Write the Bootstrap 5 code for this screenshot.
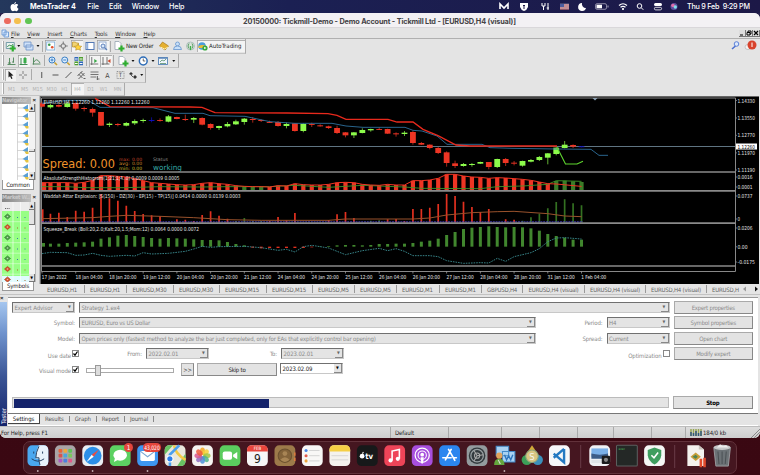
<!DOCTYPE html>
<html lang="en">
<head>
    <meta charset="UTF-8">
    <meta name="viewport" content="width=device-width, initial-scale=1.0">
    <title>MetaTrader 4 - Strategy Tester</title>
    <link rel="stylesheet" href="https://cdn.jsdelivr.net/npm/bootstrap@5.3.2/dist/css/bootstrap.min.css">
    <style>
        body { width: 760px; height: 475px; overflow: hidden; font: 6px/1 "DejaVu Sans Condensed", "DejaVu Sans", sans-serif; letter-spacing: -.1px; color: #222; background: linear-gradient(#242352, #3b0a14 30%, #3a0812); }
        svg { display: block; flex: none; letter-spacing: 0; }
        .mac-bar { height: 13px; padding: 0 10px 0 10px; background: linear-gradient(90deg, #24385c, #1b2053 38%, #1c1847); color: #fff; font: 500 7.2px/13px Inter, sans-serif; }
        .mac-bar b { font-weight: 700; margin: 0 11.5px 0 11px; }
        .mac-bar .menu-gap { gap: 10px; }
        .app-window { height: 425px; background: #e4e4e4; border-radius: 6px; overflow: hidden; }
        .title-row { height: 15px; background: #f3f1f4; border-bottom: 1px solid #d9d7da; font: 600 7.3px/15px Inter, sans-serif; color: #4b494c; padding: 1px 0 0 4px; }
        .light { width: 6.6px; height: 6.6px; border-radius: 50%; margin-top: 1px; }
        .lights { width: 90px; gap: 3.9px; }
        .menu-row { height: 11px; border-bottom: 1px solid #b0b0b0; padding: 1px 0 0 1px; font-size: 6px; color: #333; }
        .menu-row .items { gap: 7.7px; padding-left: 2px; }
        .menu-row u { text-underline-offset: 1px; text-decoration-thickness: .5px; }
        .win-btn { width: 7px; height: 7px; background: #ddd; border-right: 1px solid #777; border-bottom: 1px solid #777; }
        .tool-row { border-right: 1px solid #aaa; border-bottom: 1px solid #c4c4c4; padding-left: 2px; }
        .grip { width: 2px; height: 11px; border-right: 1px solid #aaa; border-left: 1px solid #fff; margin-right: 1px; }
        .tool-sep { width: 1px; height: 11px; background: #aaa; margin: 0 1.3px; }
        .pressed { background: #f4f4f4; box-shadow: inset .7px .7px #999; }
        .work-area { height: 188px; }
        .side-col { width: 40px; padding: 1px 3px 0 2px; border-right: 1px solid #bbb; }
        .side-head { height: 7.5px; font-size: 5.6px; font-weight: bold; letter-spacing: -.3px; color: #c9c9c9; background: linear-gradient(90deg, #868686, #bcbcbc); width: 29px; line-height: 7px; white-space: nowrap; }
        .side-x { font: bold 6px/7px "Liberation Sans", sans-serif; color: #222; }
        .side-tab { width: 32px; background: #fff; border: 1px solid #999; border-top: 0; text-align: center; font-size: 6px; }
        .scroll-col { width: 8px; background: #f3f3f3; border-right: 1px solid #bbb; }
        .scroll-btn { height: 8px; background: #e4e4e4; border-right: 1px solid #777; border-bottom: 1px solid #777; font-size: 4px; line-height: 7px; text-align: center; color: #000; }
        .tab-strip { height: 11px; padding-top: 1px; border-bottom: 1px solid #c3c3c3; color: #666; font-size: 6px; letter-spacing: -.2px; display: grid; grid-template-columns: 43px 42.5px 46.5px 46px 47px 46px 42px 42px 43px 42px 41.5px 61.5px 61px 61px 31px 8px 8px; padding-left: 47px; line-height: 9px; }
        .tab-strip span { white-space: nowrap; border-right: 1px solid #999; margin-right: 5.5px; height: 8px; }
        .tab-strip .bare { border: 0; margin: 0; color: #222; }
        .tester { height: 131px; }
        .tester-side { width: 8px; }
        .tester-name { background: linear-gradient(#14236b, #3b5595 40%, #6f93cd 75%, #a5c6ef); width: 7px; color: #fff; writing-mode: vertical-rl; transform: rotate(180deg); line-height: 7px; font-size: 6.2px; padding-top: 2px; }
        .tester-main { border-top: 1px solid #999; margin-top: 2px; background: #fff; margin-right: 2px; }
        .tester-body { height: 115px; padding: 4px 5px 0 4px; color: #8a8a8a; }
        .t-row { height: 15.3px; }
        .field { height: 11px; background: #e4e4e4; border: 1px solid #c8c8c8; border-top-color: #707070; border-left-color: #707070; line-height: 9.5px; padding-left: 1.5px; white-space: nowrap; font-size: 6px; }
        .field-long { width: 457px; letter-spacing: -.17px; }
        .drop { width: 8px; height: 9px; background: #e4e4e4; border-right: 1px solid #888; border-bottom: 1px solid #888; color: #666; font-size: 4px; line-height: 8px; text-align: center; letter-spacing: 0; }
        .field.live { background: #fff; color: #222; }
        .field.live .drop { color: #000; }
        .push { background: #e3e3e3; border: 1px solid #aaa; border-right-color: #888; border-bottom-color: #888; height: 13px; line-height: 11px; text-align: center; font-size: 6px; letter-spacing: -.22px; color: #8c8c8c; }
        .push-side { width: 79.5px; margin: -1px 0 0 4px; }
        .push-more { width: 13px; margin-left: 7px; color: #333; }
        .push-skip { width: 80px; margin: 0 3px; color: #222; }
        .field-short { width: 63px; }
        .lab { width: 63px; text-align: right; margin-right: 4px; padding-top: 3px; }
        .lab-check { width: 59px; margin-right: 1px; padding-top: 5px; }
        .lab-to { width: 68px; }
        .tick { width: 7px; height: 7px; border: 1px solid #888; background: #fff; margin-top: 2.5px; }
        .rail { width: 88px; height: 4.5px; border: 1px solid #aaa; padding-left: 8px; margin: 5px 0 0 7px; }
        .thumb { width: 6px; height: 11px; background: #ddd; border: 1px solid #999; }
        .run-line { padding-top: 19px; }
        .run-bar { height: 11px; width: 657px; background: #e4e4e4; border: 1px solid #bbb; padding: .5px; }
        .run-fill { background: #14236b; height: 9px; }
        .tester-tabs { height: 12px; background: #e4e4e4; border-top: 1px solid #777; line-height: 10px; font-size: 6px; color: #555; }
        .tester-tabs .on { background: #fff; border: solid #444; border-width: 0 1px 1px 0; width: 32px; height: 10px; text-align: center; color: #111; }
        .tester-tabs span { border-right: 1px solid #888; height: 6px; line-height: 6px; padding: 0 5px; margin-top: 2px; }
        .status-row { height: 14px; border-top: 1px solid #bdbdbd; background: linear-gradient(#ddd, #cbcbcb); display: grid; grid-template-columns: 391px 58px 53px 38px 38px 36px 38px 34px 1fr; line-height: 12px; color: #222; }
        .status-row div { border-right: 1px solid #aaa; padding-left: 1px; height: 11px; }
        .status-row div:last-child { border: 0; }
        .dock-area { height: 37px; padding-top: 2.5px; }
        .dock-bar { width: 714px; height: 33px; margin: auto; border: 1px solid #62323b; border-radius: 7px; background: #451620; }
    </style>
</head>
<body>
    <!-- macOS menu bar -->
    <div class="mac-bar d-flex align-items-center">
        <svg width="9" height="10" viewBox="0 0 18 20"><path fill="#fff" d="M12 0c0 3-2 4-3.500 4C8.500 2 10 .5 12 0zM9 5c1 0 2-1 4-1 1.500 0 3 1 3.500 2-3.500 2-3 6 .5 7.500C16 16 14.500 18.500 13 18.500c-1.500 0-2-1-3.500-1s-2.500 1-4 1C3 18.500 1 14 1 10.500 1 6 4 4 6 4c1.500 0 2.200 1 3 1z"/></svg>
        <b>MetaTrader 4</b>
        <div class="menu-gap d-flex"><span>File</span><span>Edit</span><span>Window</span><span>Help</span></div>
        <svg class="ms-auto" width="184" height="13" viewBox="0 0 184 13" fill="none" stroke="#fff">
            <path stroke-width="1.600" d="M1 9V4l4 4 4-4v5"/>
            <path fill="#fff" stroke="none" d="M21 3h8v4q-1 3-4 4-3-1-4-4z"/><path stroke="#1c1847" d="M25 5v4M24 5.500h2"/>
            <path d="M43 3v3h3V3m-1.500 3v4M49 3v7m-1.300-2H50"/>
            <path stroke="#b9b2c6" stroke-width="5.500" d="M61 6.500h9"/><path stroke="#cf6a64" d="M61 5h9M61 7h9M61 9h9"/><path fill="#4c5da0" stroke="none" d="M61 4h4v3h-4z"/>
            <path fill="#fff" stroke="none" d="M83 3a4 4 0 1 0 4 5 4 4 0 0 1-4-5z"/>
            <rect x="96.500" y="3.700" width="11" height="5.600" rx="1.500" stroke="#aaa6bd" stroke-width=".8"/><path fill="#fff" stroke="none" d="M97.500 4.700h5.500v3.600h-5.500z"/><path stroke="#aaa6bd" d="M109 5.500v2"/>
            <path stroke-width="1.200" d="M120 5.500q4-3.500 8 0M121.500 7.300q2.500-2 5 0"/><circle cx="124" cy="9" r=".7" fill="#fff"/>
            <circle cx="140.500" cy="6" r="2.300"/><path d="M142.300 7.800l2 2"/>
            <rect x="155" y="3" width="8" height="3" rx="1.500" fill="#fff" stroke="none"/><rect x="155.400" y="7.300" width="7.200" height="2.600" rx="1.300" stroke-width=".8"/>
            <circle cx="175" cy="6.500" r="3.500" fill="#5c4f9e" stroke="none"/><circle cx="174" cy="5.500" r="1.800" fill="#e16da8" stroke="none"/><circle cx="176.300" cy="7" r="1.700" fill="#7fe0ec" stroke="none"/>
        </svg>
        <svg width="67" height="13"><text x="4" y="9" fill="#fff" font-size="7.200" font-weight="500" textLength="63" xml:space="preserve">Thu 9 Feb  9:29 PM</text></svg>
    </div>

    <div class="app-window">
        <div class="title-row d-flex align-items-center">
            <div class="lights d-flex">
                <div class="light" style="background:#ec6a5e"></div><div class="light" style="background:#f4bf4f"></div><div class="light" style="background:#61c554"></div>
            </div>
            <svg width="560" height="13"><text x="149" y="9.500" fill="#454346" font-size="7.300" font-weight="700" textLength="273">20150000: Tickmill-Demo - Demo Account - Tickmill Ltd - [EURUSD,H4 (visual)]</text></svg>
        </div>
        <div class="menu-row d-flex align-items-center">
            <svg width="8" height="9" viewBox="0 0 8 9"><path fill="#dcecff" stroke="#5d8fd0" stroke-width=".8" d="M1 1h4v5H1zM3 3h4.500v5H3z"/></svg>
            <div class="items d-flex me-auto"><span><u>F</u>ile</span><span><u>V</u>iew</span><span><u>I</u>nsert</span><span><u>C</u>harts</span><span><u>T</u>ools</span><span><u>W</u>indow</span><span><u>H</u>elp</span></div>
            <div class="win-btn"><svg width="6" height="6"><path stroke="#000" stroke-width="1.200" d="M1 5h3"/></svg></div>
            <div class="win-btn ms-px"><svg width="6" height="6"><path fill="none" stroke="#000" d="M2 2V1h3v3H4M1 2.500h3V5H1z"/></svg></div>
            <div class="win-btn ms-px"><svg width="6" height="6"><path stroke="#000" stroke-width="1.200" d="M1 1l4 4m0-4L1 5"/></svg></div>
        </div>
        <div class="d-flex justify-content-between">
            <div id="toolbars" class="d-flex flex-column align-items-start"></div>
            <svg width="32" height="16" viewBox="0 0 32 16"><path stroke="#4b6fd0" stroke-width="1.600" d="M4 10l3.500-3"/><circle cx="8.500" cy="5" r="2.300" fill="#dbe8fb" stroke="#5b80d8"/><ellipse cx="20" cy="8" rx="3" ry="2.500" fill="#f3f3f3" stroke="#aaa" stroke-width=".6"/><circle cx="24" cy="6" r="4.500" fill="#d8432c"/><path stroke="#fff" d="M24 3.500V8"/></svg>
        </div>

        <!-- Navigator / Market Watch and chart -->
        <div class="work-area d-flex">
            <div class="side-col d-flex flex-column">
                <div class="d-flex justify-content-between"><div class="side-head">Navigator</div><span class="side-x">×</span></div>
                <div class="d-flex bg-white">
                    <svg width="27" height="76" id="tree"></svg>
                    <div class="scroll-col d-flex flex-column"><div class="scroll-btn">▲</div><div class="flex-grow-1"></div><div class="scroll-btn" style="height:3px"></div><div style="height:20px"></div><div class="scroll-btn">▼</div></div>
                </div>
                <div class="side-tab" style="height:10px;line-height:10px">Common</div>
                <div class="d-flex justify-content-between mt-1"><div class="side-head">Market W..</div><span class="side-x">×</span></div>
                <div class="d-flex">
                    <svg width="27" height="80" id="quotes"></svg>
                    <div class="scroll-col d-flex flex-column"><div class="scroll-btn">▲</div><div class="scroll-btn" style="height:15px"></div><div class="flex-grow-1"></div><div class="scroll-btn">▼</div></div>
                </div>
                <div class="side-tab flex-grow-1" style="line-height:8px">Symbols</div>
            </div>
            <svg id="chart" width="719" height="188" viewBox="40 96 719 188" font-size="5.400"></svg>
        </div>
        <div class="tab-strip">
            <span>EURUSD,H1</span><span>EURUSD,H1</span><span>EURUSD,M30</span><span>EURUSD,M30</span><span>EURUSD,M15</span><span>EURUSD,M15</span><span>EURUSD,M5</span><span>EURUSD,M5</span><span>EURUSD,M1</span><span>EURUSD,M1</span><span>GBPUSD,H4</span><span>EURUSD,H4 (visual)</span><span>EURUSD,H4 (visual)</span><span>EURUSD,H4 (visual)</span><span class="bare" style="color:#666">EURUSD,H</span>
            <svg width="8" height="8"><path fill="#999" d="M3 1.500v5l-3-2.500z"/></svg><svg width="8" height="8"><path fill="#111" d="M4 1.500v5l3-2.500z"/></svg>
        </div>

        <!-- Strategy tester -->
        <div class="tester d-flex">
            <div class="tester-side d-flex flex-column"><span class="side-x ps-px">×</span><div class="tester-name flex-grow-1">Tester</div></div>
            <div class="tester-main flex-grow-1">
                <div class="tester-body">
                    <div class="t-row d-flex align-items-start">
                        <div class="field field-short d-flex justify-content-between">Expert Advisor<div class="drop">▼</div></div>
                        <div class="field flex-grow-1 d-flex justify-content-between ms-1">Strategy 1.ex4<div class="drop">▼</div></div>
                        <div class="push push-side">Expert properties</div>
                    </div>
                    <div class="t-row d-flex align-items-start">
                        <div class="lab">Symbol:</div>
                        <div class="field field-long d-flex justify-content-between">EURUSD, Euro vs US Dollar<div class="drop">▼</div></div>
                        <div class="lab flex-grow-1">Period:</div>
                        <div class="field field-short d-flex justify-content-between">H4<div class="drop">▼</div></div>
                        <div class="push push-side">Symbol properties</div>
                    </div>
                    <div class="t-row d-flex align-items-start">
                        <div class="lab">Model:</div>
                        <div class="field field-long d-flex justify-content-between">Open prices only (fastest method to analyze the bar just completed, only for EAs that explicitly control bar opening)<div class="drop">▼</div></div>
                        <div class="lab flex-grow-1">Spread:</div>
                        <div class="field field-short d-flex justify-content-between">Current<div class="drop">▼</div></div>
                        <div class="push push-side">Open chart</div>
                    </div>
                    <div class="t-row d-flex align-items-start">
                        <div class="lab lab-check">Use date</div>
                        <div class="tick"><svg width="6" height="6"><path fill="none" stroke="#000" stroke-width="1.200" d="M.5 2.500l1.500 1.700L4.500.5"/></svg></div>
                        <div class="lab">From:</div>
                        <div class="field field-short d-flex justify-content-between">2022.02.01<div class="drop">▼</div></div>
                        <div class="lab lab-to">To:</div>
                        <div class="field field-short d-flex justify-content-between">2023.02.01<div class="drop">▼</div></div>
                        <div class="lab lab-check flex-grow-1">Optimization</div>
                        <div class="tick"></div>
                        <div class="push push-side">Modify expert</div>
                    </div>
                    <div class="t-row d-flex align-items-start">
                        <div class="lab lab-check">Visual mode</div>
                        <div class="tick"><svg width="6" height="6"><path fill="none" stroke="#000" stroke-width="1.200" d="M.5 2.500l1.500 1.700L4.500.5"/></svg></div>
                        <div class="rail d-flex align-items-center"><div class="thumb"></div></div>
                        <div class="push push-more">&gt;&gt;</div>
                        <div class="push push-skip">Skip to</div>
                        <div class="field live field-short d-flex justify-content-between">2023.02.09<div class="drop">▼</div></div>
                    </div>
                    <div class="run-line d-flex">
                        <div class="run-bar"><div class="run-fill" style="width:39.1%"></div></div>
                        <div class="push push-side fw-bold text-black">Stop</div>
                    </div>
                </div>
                <div class="tester-tabs d-flex align-items-start">
                    <div class="on">Settings</div>
                    <span>Results</span><span>Graph</span><span>Report</span><span>Journal</span>
                </div>
            </div>
        </div>
        <div class="status-row">
            <div>For Help, press F1</div><div class="ps-1">Default</div><div></div><div></div><div></div><div></div><div></div><div></div>
            <div class="d-flex ps-1">
                <svg width="13" height="10" viewBox="0 0 13 10"><path stroke="#96a552" stroke-width="1.500" d="M1 2v7M3.500 2v7M6 2v7M8.500 2v7M11 2v7"/><path stroke="#31577c" stroke-width="1.500" d="M1 5v4M3.500 6v3M6 4v5M8.500 6v3M11 4v5"/></svg>
                <span class="ms-px">184/0 kb</span>
                <svg class="ms-auto" width="10" height="12"><path stroke="#777" stroke-width=".8" d="M1 11l9-9M4 11l6-6M7 11l3-3"/></svg>
            </div>
        </div>
    </div>

    <!-- Dock -->
    <div class="dock-area"><div class="dock-bar"><svg id="dock" width="712" height="31" viewBox="24 441 712 31"></svg></div></div>

    <script src="https://cdn.jsdelivr.net/npm/bootstrap@5.3.2/dist/js/bootstrap.bundle.min.js"></script>
    <script>
        // Icons are drawn around 0,0
        const plus = '<path stroke="#2fae2f" stroke-width="2.200" d="M-.5 2.500h6M2.500-.5v6"/>';
        const icons = {
            newchart: '<path fill="#e9f2ef" stroke="#5a8a99" stroke-width=".8" d="M-4-3.500h8v6h-8z"/><path fill="none" stroke="#3b8f54" d="M-3 1l2-2 2 1 2-2"/>' + plus,
            profiles: '<path fill="#cfe2fa" stroke="#6a8fc4" stroke-width=".8" d="M-4-4h7v5h-7zM-2-1h7v5h-7z"/>',
            market: '<rect x="-4" y="-4" width="8" height="8" fill="#fff" stroke="#74a8d6" stroke-width=".8"/><circle cx="-1.500" cy="-1.200" r="1.300" fill="#3b9c4a"/><circle cx="1.500" cy="1.300" r="1.300" fill="#e0502c"/>',
            target: '<circle r="2.300" fill="none" stroke="#777"/><path stroke="#777" d="M0-4.500v3M0 1.500v3M-4.500 0h3M1.500 0h3"/>',
            folder: '<path fill="#f2d472" stroke="#b58d28" stroke-width=".7" d="M-4.500-4h3l1 1h2v4h-6z"/><path fill="#ffd23c" stroke="#b58d28" stroke-width=".6" d="M1-2l1.300 2 2.400.3-1.700 1.700.5 2.300L1 3.200l-2.300 1 .4-2.300L-2.700.3-.2 0z"/>',
            terminal: '<rect x="-4" y="-3.500" width="8" height="7" fill="#fff" stroke="#5278b4"/><path stroke="#8fb0e0" stroke-width="1.500" d="M-2.500-3v6"/>',
            tester: '<rect x="-4" y="-4" width="7" height="7" fill="#fff" stroke="#7e9cc8" stroke-width=".8"/><circle r="2" fill="#d9e9fb" stroke="#5d80ba"/><path stroke="#5d80ba" stroke-width="1.300" d="M1.500 1.500L4 4"/>',
            order: '<path fill="#fff" stroke="#8a9aa8" stroke-width=".7" d="M-4-4.500h4l2 2v6h-6z"/>' + plus,
            gold: '<path fill="#e5b030" stroke="#a97918" stroke-width=".7" d="M-4.500 0l3-4L4.500 0 1 4z"/><path fill="none" stroke="#fff0b0" d="M-3.500 1l4 2 3.500-2"/>',
            person: '<circle cy="-2" r="2" fill="#c9e0f8" stroke="#6494ce" stroke-width=".8"/><path fill="#c9e0f8" stroke="#6494ce" stroke-width=".8" d="M-4 3.500q0-3.500 4-3.500t4 3.500z"/>',
            signal: '<circle r="4" fill="#dbe4dc" stroke="#9fb5b2" stroke-width=".8"/><path fill="none" stroke="#5aa066" d="M-1.500-2.500q-2 2.500 0 5M1.500-2.500q2 2.500 0 5"/><path stroke="#3fae4a" stroke-width="1.300" d="M0 0v4"/>',
            auto: '<circle cx="-1" r="3.800" fill="#4b9ddb"/><path fill="#e9bb37" d="M-4.500 0q4-2 7 0v2h-7z"/><circle cx="2" cy="2" r="2.600" fill="#35a83a"/><path fill="#fff" d="M1.200.7v2.600L3.400 2z"/>',
            bars: '<path stroke="#4c8458" fill="none" stroke-width=".9" d="M-2-3v6M-3.500 2h3M2-3.500v5M.5 1h2M-4 3.500h8"/>',
            candle: '<path stroke="#2f8444" stroke-width=".9" d="M-3-3v7M-4.500 3.500h8M1-4v7"/><path fill="#39ad4b" d="M-.5-3h3v5h-3z"/>',
            line: '<path fill="none" stroke="#4c8458" stroke-width=".9" d="M-3-3.500v7M-4 3h8M-2.500 1q2.500-5 6 1"/>',
            zoomin: '<circle cx="-1" cy="-1" r="3" fill="#def" stroke="#3c80c4"/><path stroke="#3c80c4" d="M-2.500-1h3M-1-2.500v3"/><path stroke="#c9a02e" stroke-width="1.600" d="M1.500 1.500L4 4"/>',
            zoomout: '<circle cx="-1" cy="-1" r="3" fill="#def" stroke="#3c80c4"/><path stroke="#3c80c4" d="M-2.500-1h3"/><path stroke="#c9a02e" stroke-width="1.600" d="M1.500 1.500L4 4"/>',
            tile: '<path fill="#2d66b8" d="M-4-4h3.800v3.800H-4zM.5.500h4v3.700h-4z"/><path fill="#4c9e2e" d="M.5-4h4v3.800h-4zM-4 .5h3.800v3.700H-4z"/><path stroke="#fff" d="M-3.500-2h2.700M1-2h3M-3.500 2.500h2.700M1 2.500h3"/>',
            scroll: '<path stroke="#555" stroke-width=".8" d="M-3-4v8M-4.500 3h8"/><path fill="#3aa84a" d="M-.5-2v4l3-2z"/>',
            shift: '<path stroke="#555" stroke-width=".8" d="M-3-4v8M-4.500 3h8M1-4v7"/><path fill="#cf4a2c" d="M4.500-2v4l-3-2z"/>',
            clock: '<circle r="3.900" fill="#fff" stroke="#2d6cb7" stroke-width="1.500"/><path fill="none" stroke="#444" stroke-width=".8" d="M0-2.500V0h2"/>',
            template: '<rect x="-4.500" y="-3.500" width="9" height="7" fill="#eef4fb" stroke="#5885b8" stroke-width=".9"/><path stroke="#5885b8" stroke-width="1.300" d="M-4-3h8"/><path fill="none" stroke="#58906c" stroke-width=".8" d="M-3 1l2-2 2 1 2-2M-3 2.500h6"/>',
            caret: '<path fill="#111" d="M-1.500-1h3L0 1z"/>',
            cursor: '<path fill="#222" d="M-2-4v6.500l1.600-1.300L.8 4l1.200-.6L.8.7 3 .5z"/>',
            cross: '<path stroke="#777" stroke-width=".9" d="M0-4v3M0 1v3M-4 0h3M1 0h3"/>',
            vline: '<path stroke="#555" d="M0-3v6"/>', hline: '<path stroke="#555" d="M-3 0h6"/>', trend: '<path stroke="#555" d="M-3 3l6-6"/>',
            channel: '<path stroke="#555" stroke-width=".9" d="M-4 1l5-5M-3 4l6-6M-3-1l4 4M-1-3l4 4M2 3.500h2"/>',
            fibo: '<path stroke="#555" stroke-width=".8" d="M-4-3h8M-4-.5h8M-4 2h6M3 1v4M2 4h3"/>',
            letter: '<text text-anchor="middle" y="2.500" font-size="7" fill="#444">A</text>',
            tbox: '<rect x="-3.500" y="-3.500" width="7" height="7" fill="none" stroke="#777" stroke-width=".7" stroke-dasharray="1 .7"/><text text-anchor="middle" y="2.200" font-size="6" fill="#444">T</text>',
            arrows: '<path fill="#333" d="M-4-1l2-2 2 2-2 1zM0 2l2-2 2 2-2 2z"/><path stroke="#333" stroke-width=".8" d="M-2 0l2 2"/>'
        };
        const rows = [
            [['newchart', 10.5], ['caret', 5.5], ['profiles', 14], ['caret', 6], '|', ['market', 11.5, 1], ['target', 14.5], ['folder', 12, 1], ['terminal', 14], ['tester', 12, 1], '|', ['order', 14, 0, 'New Order', 31], ['gold', 14], ['person', 13], ['signal', 13], ['auto', 12, 1, 'AutoTrading', 36]],
            [['bars', 13], ['candle', 12, 1], ['line', 13], '|', ['zoomin', 12], ['zoomout', 13.5], ['tile', 13], '|', ['scroll', 11.5, 1], ['shift', 12, 1], '|', ['order', 14], ['caret', 6], ['clock', 14.5], ['caret', 6], ['template', 14], ['caret', 7.5]],
            [['cursor', 11, 1], ['cross', 14], '|', ['vline', 15.5], ['hline', 13], ['trend', 13], ['channel', 13], ['fibo', 13], ['letter', 13], ['tbox', 13], ['arrows', 12], ['caret', 5.5]]
        ];
        const heights = [15, 14.3, 14.3];
        let html = '';
        rows.forEach((row, r) => {
            html += `<div class="tool-row d-flex align-items-center" style="height:${heights[r]}px"><div class="grip"></div>`;
            row.forEach(t => {
                if (t === '|') { html += '<div class="tool-sep"></div>'; return; }
                const [name, w, on, label, lw] = t;
                html += `<div class="d-flex align-items-center ${on ? 'pressed' : ''}"><svg width="${w}" height="12" viewBox="${-w / 2} -6 ${w} 12">${icons[name]}</svg>` +
                    (label ? `<svg width="${lw}" height="12"><text x="0" y="8" font-size="6" fill="#222" textLength="${lw - 3.5}">${label}</text></svg>` : '') + '</div>';
            });
            html += '</div>';
        });
        html += '<div class="tool-row d-flex align-items-center" style="height:13.400px"><div class="grip"></div>';
        ['M1', 'M5', 'M15', 'M30', 'H1', 'H4', 'D1', 'W1', 'MN'].forEach(p => {
            html += `<svg class="${p === 'H4' ? 'pressed' : ''}" width="13.200" height="12"><text x="6.600" y="8" text-anchor="middle" font-size="5.400" fill="#b2b2b2">${p}</text></svg>`;
        });
        document.getElementById('toolbars').innerHTML = html + '</div>';

        // Navigator tree and quotes list
        let tree = '<path stroke="#bbb" stroke-width=".6" d="M15.500 0v76"/>';
        for (let i = 0; i < 9; i++) {
            const y = 4 + i * 8.5;
            tree += `<path stroke="#bbb" stroke-width=".6" d="M15.500 ${y}h6"/><path fill="#5b9fd4" d="M20.500 ${y}l5.500-3.500v6z"/><path fill="#e5c440" d="M22.500 ${y + 1}h4v2.500H24z"/>`;
        }
        document.getElementById('tree').innerHTML = tree;
        let quotes = '<rect width="27" height="80" fill="#98ff85"/><rect width="27" height="9" fill="#ececec"/><rect y="74" width="27" height="6" fill="#e0fbff"/><path stroke="#666" stroke-dasharray="1 .8" d="M3 6.500h5"/>';
        [0, 1, 0, 0, 0, 1, 1].forEach((down, i) => {
            const y = 14.5 + i * 10.5, c = down ? '#d8502a' : '#4e9b46';
            quotes += `<path fill="${c}" stroke="${down ? '#a03318' : '#2d6f30'}" stroke-width=".6" d="M2.500 ${y}l3-2.600 3 2.600-3 2.600z"/><circle cx="5.500" cy="${y}" r=".8" fill="#fff" opacity=".6"/><path stroke="#dfffd8" stroke-width=".6" d="M0 ${y + 5.2}h27"/><path stroke="${down ? '#a86a30' : '#3c79a8'}" d="M15 ${y + 1}h1M22.500 ${y + 1}h1"/>`;
        });
        quotes += '<path stroke="#fff" stroke-width=".6" d="M11 0v80M18.500 0v80"/>';
        document.getElementById('quotes').innerHTML = quotes;

        // Chart. Prices are kept in thirds of a pixel, measured from a pane origin
        const bx = i => 42 + 8.43 * i;
        const line = (pts, oy, color, extra = '') => `<polyline fill="none" stroke="${color}" ${extra} points="${pts.map(p => p[0] + ',' + (oy + p[1] / 3)).join(' ')}"/>`;
        const label = (x, y, s, w, fill = '#e8e8e8', size = 5.4) => `<text x="${x}" y="${y}" fill="${fill}" font-size="${size}" ${w ? `textLength="${w}" lengthAdjust="spacingAndGlyphs"` : ''}>${s}</text>`;
        const red = '#ee3524', lime = '#8cfb4b', green = '#3a7c27';
        let c = '<rect x="40" y="96" width="719" height="188" fill="#000"/>';
        c += '<path stroke="#666" d="M40 96.500h719M40.500 96v188"/><path stroke="#888" fill="none" d="M41.500 271.500V98h694v173.500M41.500 271.500h694"/>';
        c += '<path stroke="#5f7482" d="M42 146.500h693"/>';

        // top, bottom, high, low, color
        const candles = [[40,50,35,52,'r'],[45,52,42,56,'g'],[45,50,43,52,'r'],[40,51,36,53,'g'],[39,56,37,62,'r'],[54,57,50,64,'r'],[57,68,53,80,'r'],[66,107,66,108,'r'],[101,105,97,111,'g'],[102,105,99,109,'r'],[99,107,96,109,'g'],[93,100,88,105,'g'],[90,93,86,98,'g'],[90,92,82,97,'b'],[90,92,85,95,'r'],[79,95,75,97,'g'],[81,87,80,88,'r'],[87,90,74,93,'r'],[84,89,81,99,'g'],
            [84,104,82,106,'r'],[102,114,100,119,'r'],[108,114,107,120,'g'],[102,109,96,112,'g'],[94,103,89,105,'g'],[86,96,84,104,'g'],[87,90,81,98,'r'],[90,93,88,96,'r'],[96,98,92,99,'r'],[96,108,93,110,'r'],[102,108,98,115,'g'],[100,123,99,125,'r'],[102,123,100,127,'g'],[102,104,98,111,'r'],[106,109,103,110,'r'],[109,114,107,117,'r'],[114,129,107,132,'r'],[127,136,126,142,'r'],[127,136,126,144,'g'],[120,129,115,130,'g'],[117,121,116,125,'g'],[117,119,112,120,'r'],[117,131,116,132,'r'],[130,133,127,140,'r'],[128,132,123,138,'g'],[126,159,122,164,'r'],[159,164,156,165,'r'],[164,174,163,178,'r'],[174,189,171,192,'r'],[187,219,184,230,'r'],[220,228,212,234,'r'],[222,228,219,230,'g'],[222,225,219,230,'g'],
            [216,221,215,222,'g'],[216,231,216,238,'r'],[207,231,206,234,'g'],[207,219,204,228,'r'],[218,221,213,226,'r'],[213,227,212,230,'g'],[210,215,207,217,'g'],[201,210,198,213,'g'],[190,203,189,223,'g'],[173,192,172,196,'g'],[164,174,153,175,'g'],[165,170,163,174,'r'],[169,171,168,172,'b']];
        candles.forEach(([t, b, h, l, k], i) => {
            const x = bx(i), f = { r: red, g: lime, b: '#1010c8' }[k];
            c += `<path stroke="${f}" stroke-width=".7" d="M${x} ${90 + h / 3}V${90 + l / 3}"/><rect x="${x - 2.9}" y="${90 + t / 3}" width="5.800" height="${Math.max(.9, (b - t) / 3)}" fill="${f}"/>`;
        });
        c += line([[42,40],[67,31],[88,31],[100,52],[153,53],[175,70],[203,70],[210,77],[245,79],[270,95],[295,100],[332,100],[346,108],[363,112],[405,112],[413,121],[422,123],[437,138],[447,163],[482,163],[490,173],[512,175],[557,177],[591,178],[599,196],[608,196]], 90, '#2e6f9c', 'stroke-width=".9"');
        c += line([[95,25],[110,50],[190,51],[202,52],[215,68],[287,69],[328,71],[337,76],[346,88],[388,88],[397,96],[413,96],[423,118],[438,137],[456,165],[470,168],[557,168]], 90, '#e8291c', 'stroke-width="1.300"');
        c += line([[557,172],[565.500,222],[577,222],[583,214]], 90, '#5fd62f', 'stroke-width="1.100"');
        c += '<path fill="#8fa3b5" d="M592.500 98h5l-2.500 2.500z"/>';
        c += label(43.500, 104, 'EURUSD,H4  1.12260 1.12260 1.12260 1.12260', 106);
        c += label(42.500, 167.500, 'Spread: 0.00', 72.500, '#f0932b', 11.5);
        c += label(119, 161, 'max:', 11, '#c0452a', 4.5) + label(132, 161, '0.00', 10, '#c0452a', 4.5);
        c += label(119, 165.300, 'avg:', 11, '#c8862a', 4.5) + label(132, 165.300, '0.00', 10, '#c8862a', 4.5);
        c += label(119, 169.500, 'min:', 11, '#c9b92c', 4.5) + label(132, 169.500, '0.00', 10, '#c9b92c', 4.5);
        c += label(153, 161, 'Status', 15, '#8a8a8a', 4.8) + label(153, 169.500, 'working', 29, '#35a5a5', 7.5);

        // AbsoluteStrengthHistogram
        const strength = [38,38,38,38,40,37,31,17,17,19,21,26,32,38,40,42,44,45,44,40,38,41,43,47,49,50,50,51,47,48,41,44,45,45,43,38,37,38,43,45,46,43,45,45,32,32,30,25,13,13,18,21,22,25,23,24,26,28,31,36,41,33,32,34,36];
        strength.forEach((v, i) => {
            const g = (i > 23 && i < 27) || i > 60;
            c += `<rect x="${Math.max(42, bx(i) - 2.1)}" y="${170 + v / 3}" width="4.200" height="${(60 - v) / 3 + .3}" fill="${g ? green : red}"/>`;
        });
        c += line([[0,50],[3,50],[5,53],[10,53],[14,50],[19,51],[22,50],[27,50],[30,46],[34,52],[38,46],[43,51],[45,55],[52,56],[54,50],[57,48],[60,43],[61,32],[64,34]].map(p => [bx(p[0]), p[1]]), 170, '#3f9428', 'stroke-width=".9"');
        c += line(strength.map((v, i) => [bx(i), i > 60 ? 42 + (i - 61) * 2.4 : v]), 170, red, 'stroke-width="1"');
        c += label(43.500, 179.500, 'AbsoluteStrengthHistogram(1;21;1;4..0) 0.0009 0.0009 0.0005', 136);

        // Waddah Attar Explosion, 0 leaves a gap
        const waddah = [118,131,128,141,122,125,113,72,85,92,107,123,132,136,139,0,148,149,153,135,124,137,146,-153,-144,-152,-153,153,141,151,129,0,0,0,150,133,126,144,0,-152,-151,148,147,153,117,117,113,102,72,78,95,111,126,117,0,148,149,-152,-142,-131,-115,-96,-88,-100,-106];
        waddah.forEach((v, i) => {
            if (v) c += `<path stroke="${v < 0 ? '#337021' : '#e2301f'}" stroke-width="1.700" d="M${Math.max(42.7, bx(i))} 222.500V${170 + Math.abs(v) / 3}"/>`;
        });
        c += line([[0,146],[6,143],[8,139],[10,136],[14,139],[18,143],[22,149],[26,151],[34,151],[36,147],[44,147],[46,144],[48,135],[51,128],[54,125],[56,124],[60,131],[62,138],[64,140]].map(p => [bx(p[0]), p[1]]), 170, '#99522c', 'stroke-width="1"');
        c += '<path stroke="#4a44cc" stroke-dasharray="2 .8" d="M42 221.900h541"/>';
        c += label(43.500, 198, 'Waddah Attar Explosion: [S(150) - DZ(30) - EP(15) - TP(15)] 0.0414 0.0000 0.0139 0.0003', 197);

        // Squeeze_Break
        const squeeze = [219,221,221,219,218,217,215,206,202,197,195,198,201,204,206,204,205,206,208,210,210,211,216,222,226,233,235,234,234,234,234,234,232,229,228,226,225,225,226,225,222,222,221,221,219,215,212,206,195,186,177,173,171,169,171,172,171,172,175,182,192,198,203,209,209];
        squeeze.forEach((v, i) => {
            c += `<rect x="${Math.max(42, bx(i) - 1.5)}" y="${170 + Math.min(v, 230) / 3}" width="3" height="${Math.abs(230 - v) / 3}" fill="${v > 230 ? '#e2301f' : '#41872e'}"/>`;
        });
        c += line([[0,251],[1,247],[3,248],[4,256],[5,255],[6,250],[7,256],[8,259],[10,256],[11,258],[12,248],[13,252],[15,250],[17,244],[18,237],[19,229],[20,232],[21,230],[24,229],[26,233],[28,241],[29,238],[30,246],[31,230],[32,226],[34,234],[36,254],[38,242],[40,235],[41,242],[42,236],[43,244],[44,257],[46,257],[47,260],[48,272],[50,280],[52,278],[53,279],[54,265],[55,274],[56,260],[58,248],[59,236],[60,215],[61,204],[62,203],[64,207]].map(p => [bx(p[0]), p[1]]), 170, '#3c8f94', 'stroke-width=".9" stroke-dasharray="1.600 1"');
        c += label(43.500, 230.500, 'Squeeze_Break (Boll:20,2.0;Kalt:20,1.5;Mom:12) 0.0064 0.0000 0.0072', 155.500);

        // Pane borders and scales
        [172, 190.800, 223.200, 266].forEach(y => c += `<path stroke="#8a8a8a" stroke-width="1.700" d="M41 ${y}h694.500"/>`);
        [['1.14330', 102.500], ['1.13550', 120], ['1.12770', 137.300], ['1.11970', 154.900], ['1.11190', 172], ['0.0016', 179], ['0.0001', 189], ['0.0737', 198], ['0', 221], ['0.0206', 230], ['0.00', 248.800], ['-0.0175', 264]].forEach(([s, y]) => {
            c += label(737.5, y, s, s.length * 2.5) + `<path stroke="#888" stroke-width=".8" d="M735 ${y - 2}h2"/>`;
        });
        c += '<rect x="736" y="143.500" width="21" height="6" fill="#fff"/>' + label(737.500, 148.500, '1.12260', 17.500, '#000');
        ['17 Jan 2022', '18 Jan 04:00', '18 Jan 20:00', '19 Jan 12:00', '20 Jan 04:00', '20 Jan 20:00', '21 Jan 12:00', '24 Jan 04:00', '24 Jan 20:00', '25 Jan 12:00', '26 Jan 04:00', '26 Jan 20:00', '27 Jan 12:00', '28 Jan 04:00', '28 Jan 20:00', '31 Jan 12:00', '1 Feb 04:00'].forEach((s, i) => {
            c += label(41.800 + i * 33.72, 278.800, s, s.length * 2.27) + `<path stroke="#999" stroke-width=".8" d="M${42 + i * 33.72} 271v2.500"/>`;
        });
        document.getElementById('chart').innerHTML = c;

        // Dock icons are drawn in a 20x20 box
        const tile = f => `<rect width="20" height="20" rx="4.500" fill="${f}"/>`;
        const petals = ['#f5a623', '#f7d038', '#a3c644', '#4fb58a', '#4a90d9', '#8e6bc0', '#d8578f', '#ee5a3c'].map((f, i) => `<ellipse cx="10" cy="5.800" rx="2.400" ry="3.600" fill="${f}" opacity=".85" transform="rotate(${i * 45} 10 10)"/>`).join('');
        const pads = ['#e8633c', '#eda83c', '#5fc25a', '#d6524d', '#4aa6dc', '#7ac85c', '#ad58c2', '#4b7fe0', '#e25a8a'].map((f, i) => `<rect x="${3.5 + i % 3 * 4.7}" y="${3.5 + Math.floor(i / 3) * 4.7}" width="3.600" height="3.600" rx=".8" fill="${f}"/>`).join('');
        const dock = [
            [37.8, tile('#4aa8f0') + '<path fill="#e8f3fc" d="M11 0h4.500Q20 0 20 4.500v11q0 4.500-4.500 4.500H12q-1-4-1-7H8q0-8 3-13z"/><path fill="none" stroke="#1d3a5c" stroke-width=".9" d="M6 6v2M14.500 6v2M4 13q6 4.500 12 0M11 1q-3 6-3 11h3q0 4 1 7"/>', 1],
            [65.2, tile('#a9a5a6') + pads],
            [92.6, tile('#e9edf2') + '<circle cx="10" cy="10" r="8.500" fill="#2c8ee8"/><path fill="#f04c3c" d="M16 4l-5 7-2-2z"/><path fill="#fff" d="M4 16l5-7 2 2z"/>', 1],
            [120.1, tile('#5dd162') + '<ellipse cx="10" cy="9.500" rx="6.500" ry="5.300" fill="#fff"/><path fill="#fff" d="M5 12l-1 4 4-2z"/>'],
            [147.5, tile('#3d96f0') + '<rect x="3" y="5.500" width="14" height="9.500" rx="1.500" fill="#fff"/><path fill="none" stroke="#7ba7d4" d="M3.500 6l6.500 5 6.500-5"/>', 1],
            [175, tile('#e9e7dc') + '<path fill="#68c162" d="M0 4.500Q0 0 4.500 0H8L0 9zM12 20L20 8v7q0 5-5 5z"/><path stroke="#f4ca45" stroke-width="2.500" d="M9 0q1 8 11 14" fill="none"/><path stroke="#4ba0ef" stroke-width="2.500" fill="none" d="M5 20V9l9-9"/><circle cx="5" cy="13" r="3" fill="#2d7eea" stroke="#fff"/>'],
            [202.4, tile('#f6f4f1') + petals],
            [229.9, tile('#5bcc5e') + '<rect x="3" y="6" width="9" height="8" rx="2" fill="#fff"/><path fill="#fff" d="M13 9l4-2.500v7L13 11z"/>'],
            [257.3, tile('#f7f6f6') + '<path fill="#e8453c" d="M0 6V4.500Q0 0 4.500 0h11Q20 0 20 4.500V6z"/><text x="10" y="5" font-size="4.200" fill="#fff" text-anchor="middle">FEB</text><text x="10" y="16.800" font-size="11.500" fill="#222" text-anchor="middle">9</text>'],
            [284.8, tile('#9d7a4a') + '<circle cx="10" cy="10" r="6.500" fill="#83633a" stroke="#6d5230"/><circle cx="10" cy="8" r="2.300" fill="#a88555"/><path fill="#a88555" d="M5.500 14q4.500-5 9 0-4.500 4-9 0z"/><path stroke="#dc7b3e" stroke-width="1.500" d="M19.500 7v3M19.500 12v3"/>'],
            [312.2, tile('#f8f7f6') + '<circle cx="4" cy="5" r="1.500" fill="#4a88e8"/><circle cx="4" cy="10" r="1.500" fill="#e35b4d"/><circle cx="4" cy="15" r="1.500" fill="#eba33c"/><path stroke="#ccc" stroke-width=".8" d="M7 5h10M7 10h10M7 15h10"/>'],
            [339.7, tile('#f4f2ee') + '<path fill="#f5cf45" d="M0 6V4.500Q0 0 4.500 0h11Q20 0 20 4.500V6z"/><path stroke="#ccc" stroke-width=".7" d="M2 10h16M2 14h16"/>'],
            [367.2, tile('#17191a') + '<circle cx="5" cy="10.500" r="2.300" fill="#fff"/><path stroke="#fff" d="M5.300 8l1-1.500"/><text x="8" y="13" font-size="7.500" font-weight="bold" fill="#fff">tv</text>'],
            [394.6, tile('#ee4458') + '<path fill="none" stroke="#fff" stroke-width="1.500" d="M7.500 14.500V5.500l7-1.500v9"/><circle cx="6" cy="14.500" r="2" fill="#fff"/><circle cx="13" cy="13" r="2" fill="#fff"/>'],
            [422.1, tile('#a74edd') + '<circle cx="10" cy="9.500" r="6.800" fill="none" stroke="#fff" stroke-width="1.200"/><circle cx="10" cy="9.500" r="4" fill="none" stroke="#fff"/><circle cx="10" cy="9" r="1.800" fill="#fff"/><path fill="#fff" d="M8.500 11.500h3l-.7 6H9.200z"/>'],
            [449.5, tile('#2b86ef') + '<path stroke="#fff" stroke-width="1.600" stroke-linecap="round" d="M11.500 4L6 14M9 4l6 10.500M3.500 12h8M14 12h2.500"/>'],
            [477, tile('#939b9e') + '<circle cx="10" cy="10" r="8" fill="#333a3e"/><circle cx="10" cy="10" r="6" fill="none" stroke="#99a1a4" stroke-width="1.200"/><circle cx="10" cy="10" r="2.500" fill="none" stroke="#aaa"/><path stroke="#aaa" d="M10 10l6-1M10 10l-3-5M10 10l-3 5"/>'],
            [504.4, '<path fill="#a9d2f3" stroke="#438ac8" d="M2 1h12v9H2zM8 6h12v10H8z"/><path fill="none" stroke="#2d75bd" stroke-width="1.300" d="M10 9l2 5 2-4 2 4 2-5"/><circle cx="5" cy="10" r="3" fill="#e2a45c"/><path fill="#64a63d" d="M0 19q0-6 5-6t5 6z"/><path stroke="#ddd" d="M4 14l2 4"/>', 1],
            [531.9, '<path fill="#d2ab38" d="M10 0l4 6H6z"/><circle cx="5" cy="14" r="5" fill="#3c9f58"/><circle cx="15.500" cy="14" r="5" fill="#3b91bc"/><circle cx="10" cy="10.500" r="6" fill="#d9c783" stroke="#8da57d"/><text x="10" y="14" font-size="9" fill="#f6f6ee" text-anchor="middle">S</text>'],
            [559.3, tile('#f6f7f9') + '<path fill="none" stroke="#2479c2" stroke-width="2.300" d="M14.500 3.500v13L4.500 8M14.500 3.500L4.500 12"/>'],
            [599.6, tile('#eff1f4') + '<path fill="#7bb0e8" d="M2 3h16v8H2z"/><path fill="#3d5d88" d="M2 8q8 2 16 0v5H2z"/><path fill="#dfe4e8" d="M2 14h16v3H2z"/><rect x="12" y="10" width="8" height="8" rx="1" fill="#1b1b1d"/><circle cx="16" cy="14" r="2" fill="#888"/>'],
            [626.8, '<rect width="20" height="20" rx="1" fill="#242826" stroke="#5b5f5e"/><text x="2" y="5" font-size="3" fill="#4fb85a">exec</text>'],
            [654.4, tile('#f5f7f5') + '<path fill="#3f9e5f" d="M10 2l6.500 2.500v5Q16 15 10 18.500 4 15 3.500 9.500v-5z"/><path fill="none" stroke="#fff" stroke-width="1.500" d="M7 9.500l2.500 2.500 4-5"/>'],
            [695.6, '<path fill="#f4f2ee" d="M2 0h11l5 4v16H2z"/><path fill="#c9c5be" d="M13 0v4h5z"/><path fill="#c79e38" d="M5 11l5-4 5 4-5 4z"/><path fill="#4c8453" d="M7 11l3-2 2 2-2 2z"/><path stroke="#e04a2c" stroke-width="2.500" d="M15 13v8M18.500 12v9"/>'],
            [722, '<path fill="#6c7276" stroke="#a4a8aa" stroke-width=".8" d="M2 2h16l-2 18H4z"/><ellipse cx="10" cy="2" rx="8" ry="2.500" fill="#c5c8c9"/><path fill="#eee" d="M5 2l3-3 3 2 3-1 2 2z"/><path stroke="#4b5154" d="M6 6l1 12M10 6v12M14 6l-1 12"/>']
        ];
        let d = dock.map(([x, art, dot]) => `<g transform="translate(${x - 10.3} 444.300) scale(1.040)">${art}</g>` + (dot ? `<circle cx="${x}" cy="470" r=".9" fill="#c5aeb2"/>` : '')).join('');
        d += '<path stroke="#734650" stroke-width=".8" d="M580.700 444v23M674.700 444v23"/>';
        d += '<circle cx="128.500" cy="446.500" r="4.500" fill="#e5453c"/><text x="128.500" y="449" font-size="6.500" fill="#fff" text-anchor="middle">1</text>';
        d += '<rect x="143" y="442" width="18" height="9" rx="4.500" fill="#e5453c"/><text x="152" y="448.800" font-size="6" fill="#fff" text-anchor="middle" textLength="15.500" lengthAdjust="spacingAndGlyphs">43,020</text>';
        document.getElementById('dock').innerHTML = d;
    </script>
</body>
</html>
